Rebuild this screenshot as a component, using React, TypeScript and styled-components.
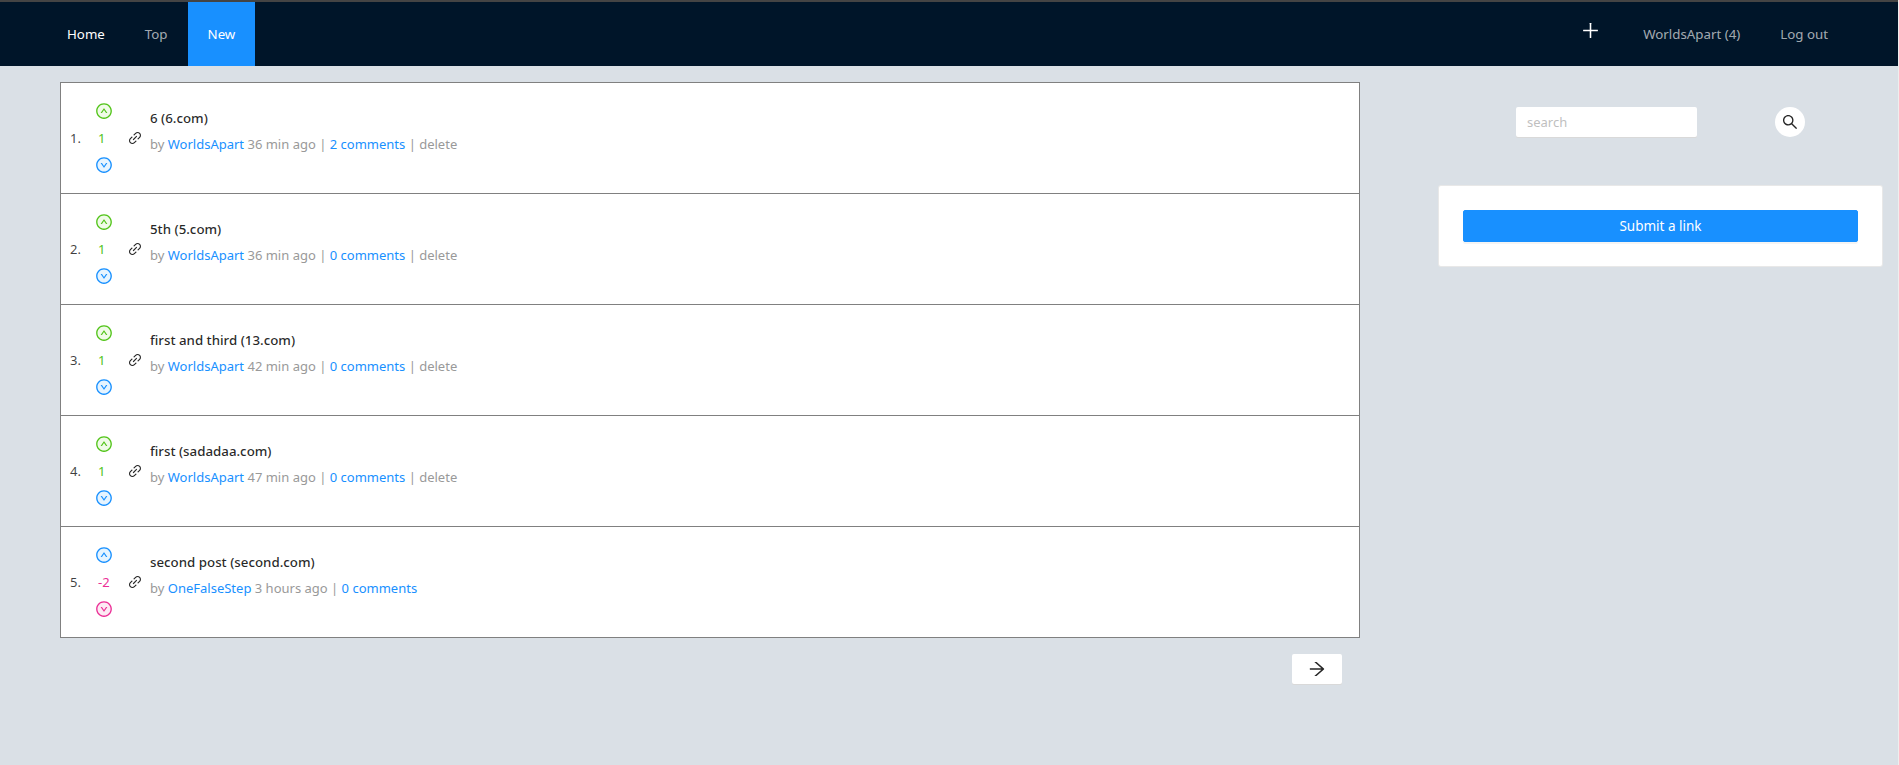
import {createGlobalStyle} from 'styled-components'
import styled from 'styled-components'
import {
  AiOutlineArrowRight,
  AiOutlineDownCircle,
  AiOutlineLink,
  AiOutlinePlus,
  AiOutlineSearch,
  AiOutlineUpCircle,
} from 'react-icons/ai'

type Post = {
  title: string
  author: string
  age: string
  comments: number
  score: number
  canDelete: boolean
}

const posts: Post[] = [
  {title: '6 (6.com)', author: 'WorldsApart', age: '36 min ago', comments: 2, score: 1, canDelete: true},
  {title: '5th (5.com)', author: 'WorldsApart', age: '36 min ago', comments: 0, score: 1, canDelete: true},
  {title: 'first and third (13.com)', author: 'WorldsApart', age: '42 min ago', comments: 0, score: 1, canDelete: true},
  {title: 'first (sadadaa.com)', author: 'WorldsApart', age: '47 min ago', comments: 0, score: 1, canDelete: true},
  {title: 'second post (second.com)', author: 'OneFalseStep', age: '3 hours ago', comments: 0, score: -2, canDelete: false},
]

const App = () => (
  <>
    <GlobalStyle />
    <Header>
      <Nav>
        <NavItem $tone='white'>Home</NavItem>
        <NavItem>Top</NavItem>
        <NavItem $tone='active'>New</NavItem>
      </Nav>
      <Nav>
        <PlusItem><AiOutlinePlus size={21} /></PlusItem>
        <NavItem>WorldsApart (4)</NavItem>
        <NavItem>Log out</NavItem>
      </Nav>
    </Header>
    <Main>
      <Content>
        <PostList>
          {posts.map((post, i) => (
            <Row key={post.title}>
              <Rank>{i + 1}.</Rank>
              <Votes>
                <VoteIcon $color={post.score > 0 ? 'green' : 'blue'}><AiOutlineUpCircle size={18} /></VoteIcon>
                <Score $negative={post.score < 0}>{post.score}</Score>
                <VoteIcon $color={post.score > 0 ? 'blue' : 'pink'}><AiOutlineDownCircle size={18} /></VoteIcon>
              </Votes>
              <LinkMark><AiOutlineLink size={16} /></LinkMark>
              <Text>
                <Title>{post.title}</Title>
                <Meta>
                  by <Accent>{post.author}</Accent> {post.age} | <Accent>{post.comments} comments</Accent>
                  {post.canDelete && ' | delete'}
                </Meta>
              </Text>
            </Row>
          ))}
        </PostList>
        <Pager>
          <NextButton><AiOutlineArrowRight size={20} /></NextButton>
        </Pager>
      </Content>
      <Sidebar>
        <SearchRow>
          <SearchInput placeholder='search' />
          <SearchButton><AiOutlineSearch size={18} /></SearchButton>
        </SearchRow>
        <Card>
          <SubmitButton>Submit a link</SubmitButton>
        </Card>
      </Sidebar>
    </Main>
  </>
)

export default App

const GlobalStyle = createGlobalStyle`
  * {
    box-sizing: border-box;
  }
  body {
    margin: 0;
    min-height: 765px;
    background: #dae0e6;
    border-right: 1px solid #eee;
    font-family: "Noto Sans", "Open Sans", sans-serif;
    font-size: 13px;
    line-height: 22px;
    color: rgba(0, 0, 0, 0.75);
  }
`

const Header = styled.header`
  display: flex;
  justify-content: space-between;
  height: 66px;
  padding: 0 50px 0 47px;
  background: #001529;
  border-top: 2px solid #444;
`

const Nav = styled.nav`
  display: flex;
  font-size: 13.3px;
`

const toneColors = {white: '#fff', active: '#fff', muted: 'rgba(255, 255, 255, 0.65)'}

const NavItem = styled.a<{$tone?: 'white' | 'active'}>`
  display: flex;
  align-items: center;
  padding: 0 20px;
  color: ${p => toneColors[p.$tone ?? 'muted']};
  background: ${p => (p.$tone === 'active' ? '#1890ff' : 'transparent')};
`

const PlusItem = styled.a`
  display: flex;
  padding: 18px 22px 0 0;
  color: #fff;
`

const Main = styled.main`
  display: flex;
  gap: 78px;
  padding-left: 60px;
`

const Content = styled.div`
  width: 1300px;
  padding-top: 16px;
`

const PostList = styled.div`
  background: #fff;
  border: 1px solid #808080;
`

const Row = styled.article`
  display: flex;
  align-items: center;
  height: 111px;
  padding-left: 9px;
  border-bottom: 1px solid #808080;
  &:last-child {
    height: 110px;
    border-bottom: 0;
  }
`

const Rank = styled.span`
  width: 26px;
`

const Votes = styled.div`
  display: flex;
  flex-direction: column;
  align-items: center;
  gap: 8px;
  width: 16px;
`

const voteColors = {green: '#52c41a', blue: '#1890ff', pink: '#eb2f96'}
const voteTints = {green: '#f0fbe8', blue: '#e6f4ff', pink: '#fdeaf4'}

const VoteIcon = styled.span<{$color: 'green' | 'blue' | 'pink'}>`
  display: block;
  width: 16px;
  height: 16px;
  border-radius: 50%;
  color: ${p => voteColors[p.$color]};
  background: ${p => voteTints[p.$color]};
  svg {
    display: block;
    margin: -1px;
  }
`

const Score = styled.span<{$negative: boolean}>`
  align-self: flex-start;
  margin-left: 2px;
  color: ${p => (p.$negative ? '#eb2f96' : '#52c41a')};
  white-space: nowrap;
`

const LinkMark = styled.span`
  display: flex;
  margin-left: 15px;
  color: #262626;
`

const Text = styled.div`
  display: flex;
  flex-direction: column;
  gap: 4px;
  margin-left: 7px;
  padding-bottom: 14px;
`

const Title = styled.span`
  color: rgba(0, 0, 0, 0.85);
  font-size: 13.3px;
  font-weight: 500;
`

const Meta = styled.span`
  color: #999;
`

const Accent = styled.a`
  color: #1890ff;
`

const Pager = styled.div`
  display: flex;
  justify-content: flex-end;
  padding: 16px 18px 0 0;
`

const NextButton = styled.button`
  display: flex;
  align-items: center;
  justify-content: center;
  width: 50px;
  height: 30px;
  padding: 0;
  background: #fff;
  border: 0;
  border-radius: 2px;
  box-shadow: 0 1px 0 #d9d9d9;
  color: rgba(0, 0, 0, 0.85);
`

const Sidebar = styled.aside`
  width: 444px;
  padding-top: 41px;
`

const SearchRow = styled.div`
  display: flex;
  gap: 78px;
  padding-left: 78px;
`

const SearchInput = styled.input`
  width: 181px;
  height: 30px;
  padding: 4px 11px;
  background: #fff;
  border: 0;
  border-radius: 2px;
  box-shadow: 0 1px 0 #d9d9d9;
  font: inherit;
  outline: none;
  &::placeholder {
    color: #bfbfbf;
  }
`

const SearchButton = styled.button`
  display: flex;
  align-items: center;
  justify-content: center;
  width: 30px;
  height: 30px;
  padding: 0;
  background: #fff;
  border: 0;
  border-radius: 50%;
  color: rgba(0, 0, 0, 0.85);
`

const Card = styled.section`
  margin: 49px 0 0 1px;
  padding: 24px;
  background: #fff;
  border-radius: 2px;
  box-shadow: 0 0 0 1px #e8e8e8;
`

const SubmitButton = styled.button`
  display: block;
  width: 100%;
  height: 32px;
  background: #1890ff;
  border: 1px solid #1890ff;
  border-radius: 2px;
  box-shadow: 0 2px 0 rgba(0, 0, 0, 0.045);
  color: #fff;
  font: inherit;
  font-size: 13.5px;
`
